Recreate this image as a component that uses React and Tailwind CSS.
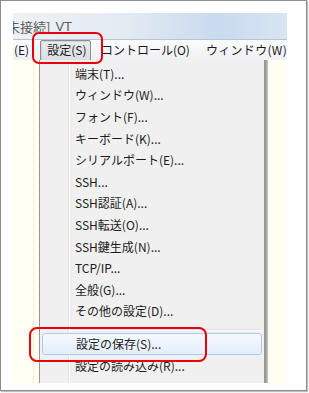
import React from "react";

const items = [
  "端末(T)...",
  "ウィンドウ(W)...",
  "フォント(F)...",
  "キーボード(K)...",
  "シリアルポート(E)...",
  "SSH...",
  "SSH認証(A)...",
  "SSH転送(O)...",
  "SSH鍵生成(N)...",
  "TCP/IP...",
  "全般(G)...",
  "その他の設定(D)...",
];

export default function App() {
  return (
    <div
      className="w-[309px] h-[393px] bg-white relative overflow-hidden"
      style={{ fontFamily: '"Noto Sans CJK JP", "Noto Sans", sans-serif' }}
    >
      <div className="w-[307px] h-[391px] border border-[#8d8d8d] bg-white shadow-[1px_1px_1px_rgba(0,0,0,0.25)] pt-[12px] pl-[12px]">
        <div className="w-[274px] h-[370px] overflow-hidden flex flex-col">
          {/* title bar */}
          <div className="h-[26px] shrink-0 flex items-center bg-[linear-gradient(90deg,#eef1f4_0%,#e4ebf3_40%,#c9daef_75%,#d8e5f3_100%)] overflow-hidden">
            <span className="ml-[-6px] text-[13px] leading-none text-[#5a5a5a] whitespace-nowrap">
              未接続]
            </span>
            <span className="ml-[5px] text-[13px] leading-none text-[#5a5a5a] whitespace-nowrap" style={{ fontFamily: '"Liberation Sans", sans-serif' }}>
              VT
            </span>
          </div>
          {/* menu bar */}
          <div className="h-[21px] shrink-0 flex items-center border-t border-[#b8c4d2] bg-[linear-gradient(180deg,#fbfcfd,#eef0f3)] text-[12px] leading-none text-[#1a1a1a] whitespace-nowrap">
            <span className="ml-[1px]">(E)</span>
            <div className="ml-[11px] h-[21px] w-[53px] flex items-center pl-[6px] border border-[#8a8f96] rounded-[2px] bg-[linear-gradient(180deg,#e8eaec,#dcdfe3)] shadow-[inset_1px_1px_0_rgba(0,0,0,0.08)]">
              設定(S)
            </div>
            <span className="ml-[10px]">コントロール(O)</span>
            <span className="ml-[16px] tracking-[0.3px]">ウィンドウ(W)</span>
          </div>
          {/* body */}
          <div className="flex flex-1 min-h-0">
            <div className="w-[26px] shrink-0 bg-[#fffff4] flex">
              <div className="ml-[20px] w-px h-full border-l border-dotted border-[#e8e3b4]" />
            </div>
            <div className="w-[226px] shrink-0 h-full relative bg-[#f0f0f0] border-l border-[#979797] border-r border-[#979797] pt-[3px]">
              <div className="absolute left-[28px] top-0 bottom-0 w-[2px] border-l border-[#e2e3e3] border-r border-r-white" />
              {items.map((t) => (
                <div key={t} className="h-[21.6px] flex items-center pl-[35px] text-[12px] leading-none text-[#1c1c1c] whitespace-nowrap relative">
                  {t}
                </div>
              ))}
              <div className="h-[11px] relative">
                <div className="absolute left-[30px] right-[1px] top-[7px] h-[2px] border-t border-[#e0e0e0] border-b border-b-white" />
              </div>
              <div className="mx-[2px] h-[22px] flex items-center pl-[33px] rounded-[3px] border border-[#a9cdf2] bg-[linear-gradient(180deg,#f5f9fe,#e3eefb)] text-[12px] leading-none text-[#1c1c1c] whitespace-nowrap relative">
                設定の保存(S)...
              </div>
              <div className="h-[22px] flex items-center pl-[35px] text-[12px] leading-none text-[#1c1c1c] whitespace-nowrap relative">
                設定の読み込み(R)...
              </div>
            </div>
            <div className="w-[3px] shrink-0 bg-[linear-gradient(90deg,#8f8f8f,#c9c9c9)]" />
            <div className="flex-1 bg-[#fffff4]" />
          </div>
        </div>
      </div>
      {/* red highlight frames */}
      <div className="absolute left-[32px] top-[32px] w-[71px] h-[32px] border-2 border-[#e8000b] rounded-[7px]" />
      <div className="absolute left-[29px] top-[327px] w-[178px] h-[35px] border-2 border-[#e8000b] rounded-[8px]" />
    </div>
  );
}
